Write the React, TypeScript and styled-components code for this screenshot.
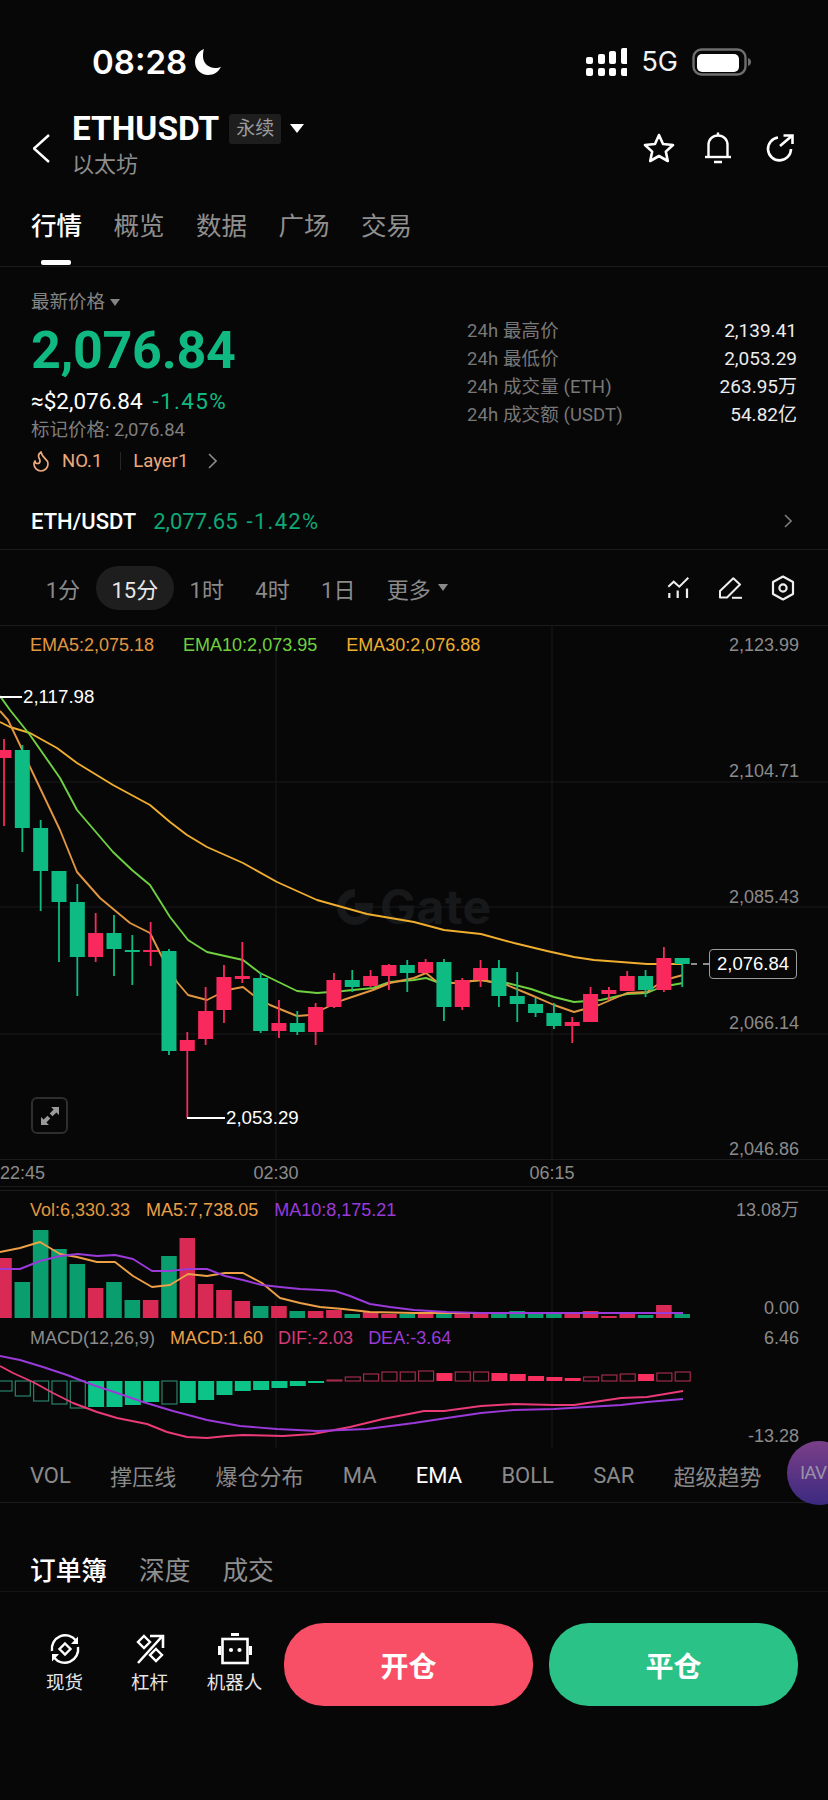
import React from 'react';
import styled, { createGlobalStyle } from 'styled-components';
import { Flame } from 'lucide-react';

const SANS = `Roboto, "Noto Sans CJK SC", sans-serif`;
const CHART_FONT = `"Liberation Sans", "Noto Sans CJK SC", sans-serif`;

const GREEN = '#0dbb83';
const RED = '#f9295e';
const BG = '#070708';
const LINE = '#1b1b1d';
const ORANGE = '#e2963f';
const LIME = '#6fd13f';
const YELLOW = '#f0ae2e';
const PURPLE = '#9a3ad8';
const PINK = '#ea3a78';

const GlobalStyle = createGlobalStyle`
  html, body {
    margin: 0;
    padding: 0;
    background: ${BG};
  }
`;

const Page = styled.div`
  position: relative;
  width: 828px;
  height: 1800px;
  overflow: hidden;
  display: flex;
  flex-direction: column;
  background: ${BG};
  color: #fff;
  font-family: ${SANS};
`;

/* status bar */
const StatusBar = styled.div`
  height: 88px;
  padding: 18px 76px 0 92px;
  display: flex;
  align-items: center;
  justify-content: space-between;
`;

const StatusGroup = styled.div`
  display: flex;
  align-items: center;
  gap: ${p => p.$gap}px;
`;

const Clock = styled.span`
  font-family: Inter, sans-serif;
  font-size: 33px;
  font-weight: 600;
  line-height: 36px;
`;

const Network = styled.span`
  font-family: Inter, sans-serif;
  font-size: 27px;
  line-height: 28px;
  color: #f2f2f2;
`;

/* header */
const Header = styled.header`
  height: 84px;
  padding: 0 34px 0 33px;
  display: flex;
  align-items: center;
`;

const BackButton = styled.div`
  width: 39px;
  display: flex;
`;

const TitleBlock = styled.div`
  flex: 1;
  padding-bottom: 6px;
  display: flex;
  flex-direction: column;
`;

const TitleRow = styled.div`
  display: flex;
  align-items: center;
  height: 36px;
`;

const Symbol = styled.h1`
  margin: 0;
  font-size: 33.4px;
  font-weight: 700;
  line-height: 36px;
`;

const Badge = styled.span`
  margin-left: 10px;
  width: 52px;
  height: 30px;
  border-radius: 3px;
  background: #1e1e1f;
  color: #9b9b9b;
  font-size: 19px;
  line-height: 30px;
  text-align: center;
`;

const Caret = styled.i`
  display: block;
  width: 0;
  height: 0;
  margin-left: ${p => p.$left ?? 9}px;
  border-left: ${p => p.$size}px solid transparent;
  border-right: ${p => p.$size}px solid transparent;
  border-top: ${p => Math.round(p.$size * 1.3)}px solid ${p => p.$color || '#fff'};
`;

const CoinName = styled.span`
  font-size: 22px;
  line-height: 30px;
  color: #8d8d8d;
  margin-top: 3px;
`;

const HeaderIcons = styled.div`
  display: flex;
  align-items: center;
  gap: 29px;
`;

/* main tabs */
const Tabs = styled.nav`
  padding: 18px 31px 0;
  height: 58px;
  display: flex;
  gap: 31.5px;
  border-bottom: 1px solid ${LINE};
`;

const Tab = styled.div`
  position: relative;
  font-size: 25.5px;
  font-weight: ${p => (p.$active ? 500 : 400)};
  line-height: 36px;
  color: ${p => (p.$active ? '#fff' : '#8f8f8f')};

  ${p =>
    p.$active &&
    `&::after {
      content: '';
      position: absolute;
      left: 10px;
      bottom: 1px;
      width: 30px;
      height: 5px;
      border-radius: 2px;
      background: #fff;
    }`}
`;

/* price summary */
const PriceSection = styled.section`
  display: flex;
  padding: 23px 31px 0;
  height: 210px;
`;

const PriceLeft = styled.div`
  flex: 1;
  display: flex;
  flex-direction: column;
`;

const PriceLabel = styled.div`
  display: flex;
  align-items: center;
  font-size: 18.5px;
  line-height: 24px;
  color: #848484;
`;

const BigPrice = styled.div`
  margin-top: 7px;
  font-size: 52px;
  font-weight: 700;
  line-height: 60px;
  letter-spacing: -0.3px;
  color: #10b981;
`;

const FiatRow = styled.div`
  margin-top: 6px;
  display: flex;
  gap: 10px;
  font-size: 22.5px;
  line-height: 28px;
`;

const Change = styled.span`
  color: #10b981;
  letter-spacing: 1.3px;
`;

const MarkPrice = styled.div`
  margin-top: 3px;
  font-size: 18.5px;
  line-height: 24px;
  color: #7f7f7f;
`;

const TagRow = styled.div`
  margin-top: 7px;
  display: flex;
  align-items: center;
  font-size: 18.5px;
  line-height: 24px;
  color: #eeaa7c;
`;

const FlameIcon = styled(Flame)`
  margin: 0 9px 0 -2px;
`;

const TagDivider = styled.i`
  width: 1px;
  height: 18px;
  margin: 0 12px 0 18px;
  background: #262626;
`;

const TagArrow = styled.span`
  display: flex;
  margin-left: 20px;
`;

const StatsGrid = styled.div`
  width: 330px;
  margin-top: 27px;
  display: flex;
  flex-direction: column;
`;

const StatRow = styled.div`
  display: flex;
  justify-content: space-between;
  height: 28px;
  line-height: 28px;
`;

const StatLabel = styled.span`
  font-size: 18.5px;
  letter-spacing: 0.1px;
  color: #787878;
`;

const StatValue = styled.span`
  font-size: 19px;
  color: #ececec;
`;

const SpotRow = styled.div`
  height: 42px;
  margin-bottom: 7px;
  padding: 0 36px 0 31px;
  display: flex;
  align-items: center;
  font-size: 22px;
`;

const SpotName = styled.span`
  margin-right: 17px;
  font-weight: 500;
`;

const SpotPrice = styled.span`
  color: #10a877;
  margin-right: 9px;
`;

const SpotChange = styled.span`
  flex: 1;
  color: #10a877;
  letter-spacing: 1.3px;
`;

/* timeframe toolbar */
const Toolbar = styled.div`
  height: 75px;
  padding: 0 33px 0 30px;
  display: flex;
  align-items: center;
  border-top: 1px solid ${LINE};
  border-bottom: 1px solid ${LINE};
`;

const Frame = styled.span`
  display: flex;
  align-items: center;
  height: 44px;
  padding: 0 15.7px;
  border-radius: 22px;
  font-size: 22px;
  color: ${p => (p.$active ? '#e8e8e8' : '#8a8a8a')};
  background: ${p => (p.$active ? '#1e1e1f' : 'transparent')};
`;

const ToolbarIcons = styled.div`
  margin-left: auto;
  display: flex;
  align-items: center;
  gap: 28px;
`;

/* chart */
const ChartPanel = styled.div`
  position: relative;
  height: 533px;
`;

const PlotSvg = styled.svg`
  position: absolute;
  inset: 0;
  display: block;
`;

const Legend = styled.div`
  position: absolute;
  left: ${p => p.$left}px;
  top: ${p => p.$top}px;
  display: flex;
  gap: ${p => p.$gap}px;
  font-family: ${CHART_FONT};
  font-size: 18px;
  line-height: 22px;
  white-space: nowrap;
`;

const LegendItem = styled.span`
  color: ${p => p.$color};
`;

const PriceAxis = styled.div`
  position: absolute;
  right: 29px;
  top: 8px;
  height: 526px;
  display: flex;
  flex-direction: column;
  justify-content: space-between;
  font-family: ${CHART_FONT};
  font-size: 18px;
  line-height: 22px;
  color: #8b8b8b;
  text-align: right;
`;

const Callout = styled.div`
  position: absolute;
  left: ${p => p.$x}px;
  top: ${p => p.$y}px;
  display: flex;
  align-items: center;
  font-family: ${CHART_FONT};
  font-size: 18.7px;
  line-height: 22px;
  color: #fff;

  &::before {
    content: '';
    width: ${p => p.$lead}px;
    height: 2px;
    background: #fff;
    margin-right: 1px;
  }
`;

const PriceBox = styled.div`
  position: absolute;
  left: 709px;
  top: 323px;
  width: 88px;
  height: 30px;
  box-sizing: border-box;
  border: 1px solid #9c9c9c;
  border-radius: 4px;
  background: ${BG};
  font-family: ${CHART_FONT};
  font-size: 18.5px;
  line-height: 28px;
  text-align: center;
  color: #fff;
`;

const ExpandButton = styled.div`
  position: absolute;
  left: 31px;
  top: 471px;
  width: 37px;
  height: 37px;
  box-sizing: border-box;
  border: 2px solid #2e2e30;
  border-radius: 6px;
  display: flex;
  align-items: center;
  justify-content: center;
`;

const Watermark = styled.div`
  position: absolute;
  left: 337px;
  top: 261px;
  display: flex;
  align-items: center;
  gap: 7px;
  font-family: Inter, sans-serif;
  font-size: 48px;
  font-weight: 700;
  line-height: 40px;
  letter-spacing: 0.5px;
  color: #17181a;
`;

const TimeAxis = styled.div`
  height: 26px;
  display: flex;
  align-items: center;
  border-top: 1px solid ${LINE};
  border-bottom: 1px solid ${LINE};
  font-family: ${CHART_FONT};
  font-size: 18px;
  color: #8b8b8b;
`;

const TimeLabel = styled.span`
  width: ${p => p.$width || 100}px;
  margin-left: ${p => p.$left || 0}px;
  text-align: ${p => (p.$width ? 'left' : 'center')};
`;

const SubPanel = styled.div`
  position: relative;
  height: 258px;
  margin-top: 3px;
  border-top: 1px solid ${LINE};
  box-sizing: border-box;
`;

const SubTag = styled.span`
  position: absolute;
  right: 29px;
  top: ${p => p.$top}px;
  font-family: ${CHART_FONT};
  font-size: 18px;
  line-height: 22px;
  color: #8b8b8b;
`;

/* indicator list */
const IndicatorRow = styled.div`
  height: 54px;
  padding: 0 0 0 30px;
  display: flex;
  align-items: center;
  gap: 39.3px;
  font-size: 22px;
  color: #8a8a8a;
  white-space: nowrap;
  border-bottom: 1px solid ${LINE};
`;

const Indicator = styled.span`
  color: ${p => (p.$active ? '#fff' : 'inherit')};
`;

const FloatBall = styled.div`
  position: absolute;
  left: 787px;
  top: 1441px;
  width: 64px;
  height: 64px;
  border-radius: 50%;
  background: linear-gradient(180deg, #7b3f88 0%, #3b2a80 100%);
  padding-left: 13px;
  box-sizing: border-box;
  font-size: 19px;
  letter-spacing: -1px;
  line-height: 64px;
  color: #9a90a8;
`;

/* order book tabs */
const BookTabs = styled.div`
  height: 89px;
  box-sizing: border-box;
  padding: 50px 30px 0;
  display: flex;
  gap: 32px;
  border-bottom: 1px solid #141415;
`;

const BookTab = styled.span`
  font-size: 25.7px;
  line-height: 36px;
  font-weight: ${p => (p.$active ? 500 : 400)};
  color: ${p => (p.$active ? '#fff' : '#8f8f8f')};
`;

/* bottom actions */
const ActionBar = styled.div`
  padding: 31px 0 0 22px;
  display: flex;
  align-items: flex-start;
`;

const ActionItem = styled.div`
  width: 85px;
  padding-top: 10px;
  display: flex;
  flex-direction: column;
  align-items: center;
`;

const ActionIcon = styled.div`
  height: 32px;
  display: flex;
  align-items: center;
`;

const ActionLabel = styled.span`
  margin-top: 6px;
  font-size: 18.5px;
  line-height: 24px;
  color: #e6e6e6;
`;

const TradeButton = styled.button`
  width: 249px;
  height: 83px;
  margin-left: ${p => p.$left}px;
  border: 0;
  padding: 0;
  border-radius: 40px;
  background: ${p => p.$bg};
  color: #fff;
  font-family: ${SANS};
  font-size: 28px;
  font-weight: 700;
`;

type Candle = [number, number, number, number, 'g' | 'r'];

// wick top, wick bottom, body top, body bottom (page y), colour
const candles: Candle[] = [
  [739, 826, 750, 758, 'r'],
  [745, 852, 750, 828, 'g'],
  [820, 911, 828, 871, 'g'],
  [871, 962, 871, 902, 'g'],
  [884, 996, 902, 957, 'g'],
  [913, 962, 933, 957, 'r'],
  [915, 976, 933, 949, 'g'],
  [935, 985, 950, 952, 'g'],
  [922, 966, 950, 952, 'r'],
  [949, 1055, 951, 1051, 'g'],
  [1032, 1118, 1040, 1051, 'r'],
  [987, 1045, 1011, 1039, 'r'],
  [965, 1023, 977, 1010, 'r'],
  [942, 983, 976, 979, 'r'],
  [973, 1033, 978, 1031, 'g'],
  [1000, 1038, 1023, 1031, 'r'],
  [1011, 1035, 1023, 1032, 'g'],
  [1003, 1045, 1007, 1032, 'r'],
  [973, 1008, 980, 1007, 'r'],
  [970, 992, 980, 987, 'g'],
  [970, 987, 976, 986, 'r'],
  [964, 990, 965, 976, 'r'],
  [960, 992, 965, 973, 'g'],
  [959, 973, 962, 973, 'r'],
  [959, 1021, 962, 1007, 'g'],
  [978, 1010, 980, 1007, 'r'],
  [960, 987, 968, 980, 'r'],
  [960, 1007, 968, 996, 'g'],
  [972, 1022, 996, 1004, 'g'],
  [998, 1017, 1004, 1013, 'g'],
  [1003, 1029, 1013, 1026, 'g'],
  [1017, 1043, 1022, 1026, 'r'],
  [987, 1022, 994, 1022, 'r'],
  [987, 1000, 990, 994, 'r'],
  [971, 991, 976, 991, 'r'],
  [970, 997, 976, 990, 'g'],
  [947, 992, 958, 990, 'r'],
  [958, 987, 958, 964, 'g'],
];

const volumes: [number, 'g' | 'r'][] = [
  [1258, 'r'], [1282, 'g'], [1230, 'g'], [1249, 'g'], [1264, 'g'], [1288, 'r'], [1282, 'g'], [1300, 'g'],
  [1300, 'r'], [1256, 'g'], [1238, 'r'], [1284, 'r'], [1290, 'r'], [1301, 'r'], [1306, 'g'], [1306, 'r'],
  [1311, 'g'], [1311, 'r'], [1310, 'r'], [1314, 'g'], [1312, 'r'], [1314, 'r'], [1314, 'g'], [1313, 'r'],
  [1314, 'g'], [1314, 'r'], [1314, 'r'], [1314, 'g'], [1311, 'g'], [1314, 'g'], [1314, 'g'], [1312, 'r'],
  [1311, 'r'], [1316, 'r'], [1314, 'r'], [1315, 'g'], [1305, 'r'], [1314, 'g'],
];

// bar end in page y (zero line is 1381), hollow flag
const macdBars: [number, boolean][] = [
  [1391, true], [1396, true], [1401, true], [1404, true], [1408, true], [1407, false], [1407, false], [1405, false],
  [1402, false], [1404, true], [1403, false], [1400, false], [1395, false], [1391, false], [1390, false], [1388, false],
  [1386, false], [1383, false], [1380, true], [1377, true], [1374, true], [1372, true], [1372, true], [1371, true],
  [1373, false], [1372, true], [1372, true], [1373, false], [1374, false], [1376, false], [1377, false], [1378, false],
  [1377, true], [1375, true], [1374, true], [1374, false], [1373, true], [1372, true],
];

const ema30: number[][] = [
  [0, 722], [10, 727], [30, 733], [57, 748], [77, 763], [113, 785], [150, 805], [170, 822], [187, 835], [207, 847],
  [243, 863], [277, 882], [317, 900], [367, 914], [414, 922], [444, 930], [481, 934], [514, 943], [547, 951],
  [574, 957], [594, 960], [621, 962], [647, 964], [683, 964],
];

const ema10: number[][] = [
  [0, 696], [10, 710], [30, 735], [60, 778], [77, 810], [113, 852], [132, 870], [150, 885], [170, 917], [188, 940],
  [207, 952], [243, 960], [260, 973], [297, 991], [317, 993], [343, 991], [373, 988], [390, 982], [414, 980],
  [426, 978], [437, 982], [454, 983], [481, 980], [492, 982], [507, 983], [531, 989], [554, 997], [574, 1002],
  [601, 1000], [627, 994], [647, 993], [661, 987], [683, 983],
];

const ema5: number[][] = [
  [0, 711], [8, 720], [20, 745], [30, 767], [60, 830], [77, 872], [100, 898], [130, 923], [150, 933], [162, 957],
  [177, 982], [188, 995], [207, 1000], [227, 990], [243, 987], [253, 995], [270, 1005], [297, 1016], [310, 1015],
  [343, 1000], [373, 990], [390, 983], [414, 978], [426, 973], [437, 982], [454, 983], [481, 980], [492, 982],
  [507, 985], [531, 995], [554, 1005], [574, 1012], [599, 1005], [627, 993], [647, 992], [657, 985], [672, 978],
  [683, 975],
];

const volMa5: number[][] = [
  [0, 1252], [20, 1248], [40, 1242], [60, 1254], [77, 1257], [97, 1262], [115, 1262], [133, 1276], [152, 1287],
  [170, 1285], [188, 1274], [207, 1276], [225, 1273], [243, 1273], [262, 1283], [280, 1298], [300, 1303],
  [320, 1307], [343, 1309], [370, 1312], [414, 1313], [683, 1313],
];

const volMa10: number[][] = [
  [0, 1269], [20, 1269], [40, 1261], [60, 1256], [78, 1254], [97, 1256], [115, 1255], [133, 1259], [152, 1271],
  [170, 1271], [188, 1269], [207, 1269], [225, 1276], [243, 1280], [262, 1285], [280, 1287], [300, 1289],
  [320, 1290], [335, 1291], [350, 1296], [370, 1304], [390, 1307], [414, 1310], [447, 1312], [480, 1313], [683, 1313],
];

const dif: number[][] = [
  [0, 1366], [13, 1373], [33, 1382], [53, 1393], [73, 1403], [97, 1412], [117, 1418], [147, 1424], [167, 1432],
  [187, 1437], [207, 1438], [227, 1436], [243, 1435], [283, 1436], [313, 1434], [350, 1427], [383, 1419], [414, 1413],
  [424, 1411], [444, 1411], [481, 1406], [514, 1404], [554, 1405], [574, 1405], [621, 1398], [647, 1397], [683, 1391],
];

const dea: number[][] = [
  [0, 1356], [20, 1360], [43, 1367], [67, 1375], [93, 1385], [117, 1393], [143, 1402], [173, 1411], [207, 1420],
  [240, 1426], [277, 1429], [317, 1431], [367, 1429], [414, 1423], [447, 1418], [481, 1413], [514, 1410], [554, 1409],
  [587, 1407], [621, 1405], [647, 1402], [683, 1399],
];

const candleX = (i: number) => 4 + i * 18.33;
const toPoints = (pts: number[][]) => pts.map(p => p.join(',')).join(' ');

const Series: React.FC<{ pts: number[][]; color: string }> = ({ pts, color }) => (
  <polyline points={toPoints(pts)} fill="none" stroke={color} strokeWidth={1.9} strokeLinejoin="round" />
);

const Chevron: React.FC<{ w: number; h: number; color: string; sw?: number; flip?: boolean }> = ({ w, h, color, sw = 1.6, flip }) => (
  <svg width={w} height={h} viewBox={`0 0 ${w} ${h}`}>
    <polyline
      points={flip ? `${w - 1},1 1,${h / 2} ${w - 1},${h - 1}` : `1,1 ${w - 1},${h / 2} 1,${h - 1}`}
      fill="none"
      stroke={color}
      strokeWidth={sw}
    />
  </svg>
);

const SignalIcon = () => (
  <svg width="42" height="28" viewBox="0 0 42 28" fill="#fff">
    {[1, 13, 24, 36].map((x, i) => (
      <g key={x}>
        <rect x={x} y={20} width={7} height={8} rx={2} />
        <rect x={x} y={9 - i * 3} width={7} height={7 + i * 3} rx={2} />
      </g>
    ))}
  </svg>
);

const BatteryIcon = () => (
  <svg width="60" height="28" viewBox="0 0 60 28">
    <rect x="1.5" y="1.5" width="52" height="25" rx="8" fill="none" stroke="#6e6e6e" strokeWidth="2.4" />
    <rect x="5" y="6" width="42" height="18" rx="5" fill="#fff" />
    <path d="M56 10 C58.5 11 59 12.5 59 14 C59 15.5 58.5 17 56 18 Z" fill="#6e6e6e" />
  </svg>
);

const MoonIcon = () => (
  <svg width="28" height="28" viewBox="0 0 28 28">
    <path d="M10 1 C4 3.5 1 8.5 1 14 C1 21.5 7 27 14 27 C20 27 25 23.5 27 18.5 C25.8 19.5 23.5 20 21 20 C14.5 20 9 15 9 8.5 C9 5.5 9.2 3 10 1 Z" fill="#fff" />
  </svg>
);

const StarIcon = () => (
  <svg width="32" height="30" viewBox="0 0 32 30">
    <path d="M16 2 L20 11 L30 12 L22.8 18.6 L24.8 28 L16 23 L7.2 28 L9.2 18.6 L2 12 L12 11 Z" fill="none" stroke="#fff" strokeWidth="2.6" strokeLinejoin="round" />
  </svg>
);

const BellIcon = () => (
  <svg width="32" height="32" viewBox="0 0 32 32">
    <path d="M1 25 H27" stroke="#fff" strokeWidth="2.4" fill="none" />
    <path d="M4.5 25 V13 C4.5 7.5 8.5 3.5 14 3.5 C19.5 3.5 23.5 7.5 23.5 13 V25" stroke="#fff" strokeWidth="2.4" fill="none" />
    <path d="M14 0.5 V3.5 M10 30 H18" stroke="#fff" strokeWidth="2.4" fill="none" />
  </svg>
);

const ShareIcon = () => (
  <svg width="29" height="28" viewBox="0 0 29 28">
    <path d="M13 3.5 A11.5 11.5 0 1 0 26 15" stroke="#fff" strokeWidth="2.6" fill="none" />
    <path d="M15 12 L27 1.8 M18.5 1.5 H27.5 V10" stroke="#fff" strokeWidth="2.6" fill="none" />
  </svg>
);

const IndicatorsIcon = () => (
  <svg width="24" height="22" viewBox="0 0 24 22">
    <polyline points="1.3,9.7 6.7,4.7 12.3,9.7 21.3,0.8" stroke="#eee" strokeWidth="2" fill="none" />
    <path d="M2.3 16 V21 M10.7 13.5 V21 M20 11.5 V21" stroke="#eee" strokeWidth="2.2" fill="none" />
  </svg>
);

const PencilIcon = () => (
  <svg width="24" height="22" viewBox="0 0 24 22">
    <path d="M1 20.5 V14 L14.3 1.2 L21 7.5 L8 20.5 Z" stroke="#eee" strokeWidth="2" fill="none" strokeLinejoin="round" />
    <path d="M13 20.8 H23" stroke="#eee" strokeWidth="2" fill="none" />
  </svg>
);

const GearIcon = () => (
  <svg width="24" height="26" viewBox="0 0 24 26">
    <path d="M12 1.5 L22 7 V19 L12 24.5 L2 19 V7 Z" stroke="#eee" strokeWidth="2.2" fill="none" strokeLinejoin="round" />
    <circle cx="12" cy="13" r="3.6" stroke="#eee" strokeWidth="2.2" fill="none" />
  </svg>
);

const ExpandIcon = () => (
  <svg width="20" height="20" viewBox="0 0 20 20" fill="#9a9a9a">
    <path d="M19 1 V9 L16.4 6.4 L12.5 10.3 L9.7 7.5 L13.6 3.6 L11 1 Z" />
    <path d="M1 19 V11 L3.6 13.6 L7.5 9.7 L10.3 12.5 L6.4 16.4 L9 19 Z" />
  </svg>
);

const GateMark = () => (
  <svg width="36" height="36" viewBox="0 0 36 36">
    <path d="M18 4 A14 14 0 1 0 32 18 H18" fill="none" stroke="#17181a" strokeWidth="8" />
  </svg>
);

const SpotIcon = () => (
  <svg width="32" height="32" viewBox="0 0 32 32">
    <path d="M3 18 A13.5 13.5 0 0 1 27 7.5" stroke="#fff" strokeWidth="2.4" fill="none" />
    <path d="M29 14 A13.5 13.5 0 0 1 5 24.5" stroke="#fff" strokeWidth="2.4" fill="none" />
    <path d="M29 3.5 V11 H22 Z M3 28.5 V21 H10 Z" fill="#fff" />
    <path d="M16 10.5 L21.5 16 L16 21.5 L10.5 16 Z" stroke="#fff" strokeWidth="2.4" fill="none" />
  </svg>
);

const LeverageIcon = () => (
  <svg width="32" height="32" viewBox="0 0 32 32">
    <path d="M4 30 L28 3.5 M16 3 H29 V15" stroke="#fff" strokeWidth="2.6" fill="none" />
    <path d="M10 3 L16 9 L10 15 L4 9 Z M22 16 L28 22 L22 28 L16 22 Z" stroke="#fff" strokeWidth="2.4" fill="none" />
  </svg>
);

const RobotIcon = () => (
  <svg width="34" height="32" viewBox="0 0 34 32">
    <rect x="4.5" y="6" width="25" height="24" stroke="#fff" strokeWidth="2.6" fill="none" />
    <path d="M13 1.5 H21" stroke="#fff" strokeWidth="3" />
    <path d="M1.5 13 V22 M32.5 13 V22" stroke="#fff" strokeWidth="3" />
    <circle cx="13" cy="17" r="2.1" fill="#fff" />
    <circle cx="21.5" cy="17" r="2.1" fill="#fff" />
  </svg>
);

const stats = [
  ['24h 最高价', '2,139.41'],
  ['24h 最低价', '2,053.29'],
  ['24h 成交量 (ETH)', '263.95万'],
  ['24h 成交额 (USDT)', '54.82亿'],
];

const App: React.FC = () => (
  <Page>
    <GlobalStyle />

    <StatusBar>
      <StatusGroup $gap={7}>
        <Clock>08:28</Clock>
        <MoonIcon />
      </StatusGroup>
      <StatusGroup $gap={14}>
        <SignalIcon />
        <Network>5G</Network>
        <BatteryIcon />
      </StatusGroup>
    </StatusBar>

    <Header>
      <BackButton>
        <Chevron w={17} h={29} color="#fff" sw={2.4} flip />
      </BackButton>
      <TitleBlock>
        <TitleRow>
          <Symbol>ETHUSDT</Symbol>
          <Badge>永续</Badge>
          <Caret $size={7} />
        </TitleRow>
        <CoinName>以太坊</CoinName>
      </TitleBlock>
      <HeaderIcons>
        <StarIcon />
        <BellIcon />
        <ShareIcon />
      </HeaderIcons>
    </Header>

    <Tabs>
      <Tab $active>行情</Tab>
      <Tab>概览</Tab>
      <Tab>数据</Tab>
      <Tab>广场</Tab>
      <Tab>交易</Tab>
    </Tabs>

    <PriceSection>
      <PriceLeft>
        <PriceLabel>
          最新价格
          <Caret $size={5} $left={5} $color="#848484" />
        </PriceLabel>
        <BigPrice>2,076.84</BigPrice>
        <FiatRow>
          <span>≈$2,076.84</span>
          <Change>-1.45%</Change>
        </FiatRow>
        <MarkPrice>标记价格: 2,076.84</MarkPrice>
        <TagRow>
          <FlameIcon size={24} strokeWidth={1.7} />
          NO.1
          <TagDivider />
          Layer1
          <TagArrow>
            <Chevron w={9} h={16} color="#8a8a8a" />
          </TagArrow>
        </TagRow>
      </PriceLeft>
      <StatsGrid>
        {stats.map(([label, value]) => (
          <StatRow key={label}>
            <StatLabel>{label}</StatLabel>
            <StatValue>{value}</StatValue>
          </StatRow>
        ))}
      </StatsGrid>
    </PriceSection>

    <SpotRow>
      <SpotName>ETH/USDT</SpotName>
      <SpotPrice>2,077.65</SpotPrice>
      <SpotChange>-1.42%</SpotChange>
      <Chevron w={8} h={14} color="#7a7a7a" />
    </SpotRow>

    <Toolbar>
      <Frame>1分</Frame>
      <Frame $active>15分</Frame>
      <Frame>1时</Frame>
      <Frame>4时</Frame>
      <Frame>1日</Frame>
      <Frame>
        更多
        <Caret $size={5} $left={7} $color="#8a8a8a" />
      </Frame>
      <ToolbarIcons>
        <IndicatorsIcon />
        <PencilIcon />
        <GearIcon />
      </ToolbarIcons>
    </Toolbar>

    <ChartPanel>
      <Watermark>
        <GateMark />
        Gate
      </Watermark>
      <PlotSvg width="828" height="533" viewBox="0 626 828 533">
        {[782, 907, 1034].map(y => (
          <line key={y} x1="0" x2="828" y1={y} y2={y} stroke={LINE} strokeWidth="1" />
        ))}
        {[276, 552].map(x => (
          <line key={x} x1={x} x2={x} y1="626" y2="1159" stroke={LINE} strokeWidth="1" />
        ))}
        <Series pts={ema30} color={YELLOW} />
        <Series pts={ema10} color={LIME} />
        <Series pts={ema5} color={ORANGE} />
        {candles.map(([wt, wb, bt, bb, c], i) => {
          const x = candleX(i);
          const fill = c === 'g' ? GREEN : RED;
          return (
            <g key={i} fill={fill}>
              <rect x={x - 0.9} y={wt} width={1.8} height={wb - wt} />
              <rect x={x - 7.5} y={bt} width={15} height={Math.max(bb - bt, 2)} />
            </g>
          );
        })}
        <line x1="691" x2="709" y1="964" y2="964" stroke="#bbb" strokeWidth="1.4" strokeDasharray="6 6" />
      </PlotSvg>
      <Legend $left={30} $top={8} $gap={29}>
        <LegendItem $color={ORANGE}>EMA5:2,075.18</LegendItem>
        <LegendItem $color={LIME}>EMA10:2,073.95</LegendItem>
        <LegendItem $color={YELLOW}>EMA30:2,076.88</LegendItem>
      </Legend>
      <PriceAxis>
        <span>2,123.99</span>
        <span>2,104.71</span>
        <span>2,085.43</span>
        <span>2,066.14</span>
        <span>2,046.86</span>
      </PriceAxis>
      <Callout $x={0} $y={60} $lead={22}>2,117.98</Callout>
      <Callout $x={187} $y={481} $lead={38}>2,053.29</Callout>
      <PriceBox>2,076.84</PriceBox>
      <ExpandButton>
        <ExpandIcon />
      </ExpandButton>
    </ChartPanel>

    <TimeAxis>
      <TimeLabel $width={226}>22:45</TimeLabel>
      <TimeLabel>02:30</TimeLabel>
      <TimeLabel $left={176}>06:15</TimeLabel>
    </TimeAxis>

    <SubPanel>
      <PlotSvg width="828" height="257" viewBox="0 1191 828 257">
        {[276, 552].map(x => (
          <line key={x} x1={x} x2={x} y1="1191" y2="1448" stroke={LINE} strokeWidth="1" />
        ))}
        {volumes.map(([top, c], i) => (
          <rect key={i} x={candleX(i) - 7.8} y={top} width={15.6} height={1318 - top} fill={c === 'g' ? '#0a9e6e' : '#d92a55'} />
        ))}
        <Series pts={volMa5} color="#eda045" />
        <Series pts={volMa10} color={PURPLE} />
        {macdBars.map(([end, hollow], i) => {
          const x = candleX(i) - 7.5;
          const y = Math.min(end, 1381);
          const h = Math.abs(1381 - end);
          const down = end > 1381;
          if (hollow) {
            return <rect key={i} x={x + 0.5} y={y} width={15} height={h} fill="none" stroke={down ? '#2a8068' : '#a02c4a'} strokeWidth="1.2" />;
          }
          return <rect key={i} x={x} y={y} width={16} height={Math.max(h, 1.5)} fill={down ? '#0cc488' : '#f92f60'} />;
        })}
        <Series pts={dif} color={PINK} />
        <Series pts={dea} color={PURPLE} />
      </PlotSvg>
      <Legend $left={30} $top={8} $gap={16}>
        <LegendItem $color="#e0993d">Vol:6,330.33</LegendItem>
        <LegendItem $color="#eda045">MA5:7,738.05</LegendItem>
        <LegendItem $color={PURPLE}>MA10:8,175.21</LegendItem>
      </Legend>
      <Legend $left={30} $top={136} $gap={15}>
        <LegendItem $color="#8b8b8b">MACD(12,26,9)</LegendItem>
        <LegendItem $color="#eda045">MACD:1.60</LegendItem>
        <LegendItem $color="#d63a78">DIF:-2.03</LegendItem>
        <LegendItem $color={PURPLE}>DEA:-3.64</LegendItem>
      </Legend>
      <SubTag $top={8}>13.08万</SubTag>
      <SubTag $top={106}>0.00</SubTag>
      <SubTag $top={136}>6.46</SubTag>
      <SubTag $top={234}>-13.28</SubTag>
    </SubPanel>

    <IndicatorRow>
      <Indicator>VOL</Indicator>
      <Indicator>撑压线</Indicator>
      <Indicator>爆仓分布</Indicator>
      <Indicator>MA</Indicator>
      <Indicator $active>EMA</Indicator>
      <Indicator>BOLL</Indicator>
      <Indicator>SAR</Indicator>
      <Indicator>超级趋势</Indicator>
    </IndicatorRow>
    <FloatBall>IAV</FloatBall>

    <BookTabs>
      <BookTab $active>订单簿</BookTab>
      <BookTab>深度</BookTab>
      <BookTab>成交</BookTab>
    </BookTabs>

    <ActionBar>
      <ActionItem>
        <ActionIcon><SpotIcon /></ActionIcon>
        <ActionLabel>现货</ActionLabel>
      </ActionItem>
      <ActionItem>
        <ActionIcon><LeverageIcon /></ActionIcon>
        <ActionLabel>杠杆</ActionLabel>
      </ActionItem>
      <ActionItem>
        <ActionIcon><RobotIcon /></ActionIcon>
        <ActionLabel>机器人</ActionLabel>
      </ActionItem>
      <TradeButton $bg="#f84f66" $left={7}>开仓</TradeButton>
      <TradeButton $bg="#2bc287" $left={16}>平仓</TradeButton>
    </ActionBar>
  </Page>
);

export default App;
